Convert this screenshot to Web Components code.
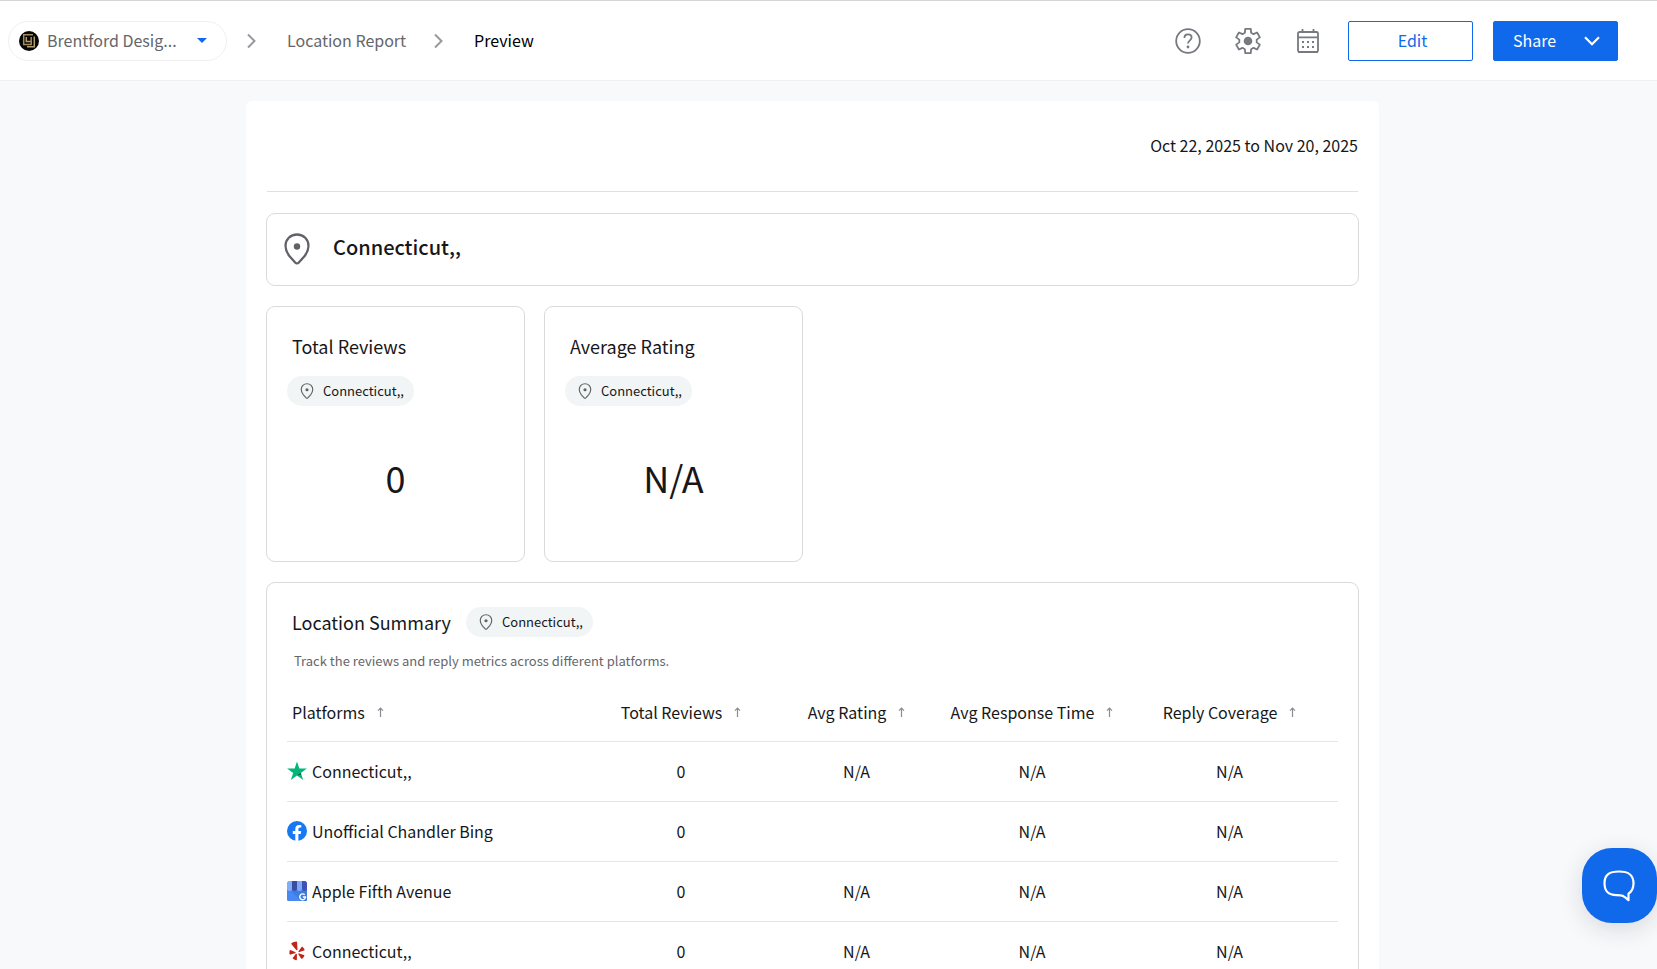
<!DOCTYPE html>
<html lang="en">
<head>
<meta charset="utf-8">
<meta name="viewport" content="width=device-width, initial-scale=1">
<title>Location Report – Preview</title>
<style>
  :root {
    --ink: #17171a;
    --muted: #65666c;
    --icon: #777980;
    --blue: #1068eb;
    --line: #e5e5e6;
    --border: #d9dadb;
    --page: #f8f9fb;
  }
  body {
    margin: 0;
    font-family: "Noto Sans CJK SC", "Noto Sans", sans-serif;
    font-size: 16px;
    line-height: 24px;
    color: var(--ink);
    background: var(--page);
  }
</style>
</head>
<body>
<report-app>
  <app-header slot="header"></app-header>
  <report-sheet>
    <span slot="range">Oct 22, 2025 to Nov 20, 2025</span>
    <location-banner>Connecticut,,</location-banner>
    <metric-grid>
      <metric-card heading="Total Reviews" place="Connecticut,,">0</metric-card>
      <metric-card heading="Average Rating" place="Connecticut,,">N/A</metric-card>
    </metric-grid>
    <location-summary place="Connecticut,,"></location-summary>
  </report-sheet>
  <chat-launcher slot="launcher"></chat-launcher>
</report-app>

<script>
// Six-toothed cog outline around (14, 14).
const cog = (() => {
  const points = [];
  for (let tooth = 0; tooth < 6; tooth++) {
    for (const [radius, offset] of [[8.8, -21], [12.4, -13], [12.4, 13], [8.8, 21]]) {
      const angle = (tooth * 60 + offset - 90) * Math.PI / 180;
      const r = Math.abs(offset) === 13 ? radius : radius;
      points.push(`${(14 + r * Math.cos(angle)).toFixed(2)},${(14 + r * Math.sin(angle)).toFixed(2)}`);
    }
  }
  return points.join(' ');
})();

const ICONS = {
  chevron: '<svg width="9" height="16" viewBox="0 0 9 16" fill="none" stroke="#98999d" stroke-width="2"><path d="M1 1.5 7.500 8 1 14.500"/></svg>',
  help: '<svg width="26" height="26" viewBox="0 0 26 26" fill="none" stroke="#777980" stroke-width="1.8"><circle cx="13" cy="13" r="11.800"/><path d="M9.400 9.900c0-2.200 1.500-3.500 3.600-3.500s3.600 1.300 3.600 3.200c0 2.700-3.600 2.900-3.600 6"/><circle cx="13" cy="19" r="1.400" fill="#777980" stroke="none"/></svg>',
  gear: `<svg width="28" height="28" viewBox="0 0 28 28" fill="none" stroke="#777980" stroke-width="1.800" stroke-linejoin="round"><polygon points="${cog}"/><circle cx="14" cy="14" r="4.300" fill="#777980" stroke="none"/></svg>`,
  calendar: '<svg width="24" height="26" viewBox="0 0 24 26" fill="none" stroke="#777980" stroke-width="1.800"><rect x="2" y="4" width="20" height="20" rx="1.500"/><path d="M2 9.300h20M6.500 4V1M17.500 4V1"/><path d="M2 24h20" stroke-width="2"/><path d="M6 14h12M6 19h12" stroke-width="2" stroke-dasharray="2 3"/></svg>',
  down: '<svg width="16" height="10" viewBox="0 0 16 10" fill="none" stroke="#fff" stroke-width="2.200"><path d="M1 1.200 8 8.200 15 1.200"/></svg>',
  pin: '<svg viewBox="0 0 26 32" fill="none"><path d="M13 1.500C6.400 1.500 1.500 6.400 1.500 12.800c0 4.200 1.800 7.600 4.300 10.800l5.600 6.100c.9 1 2.300 1 3.200 0l5.600-6.100c2.500-3.200 4.300-6.600 4.300-10.800C24.500 6.400 19.600 1.500 13 1.500z" stroke="#616268" stroke-width="2.300"/><circle cx="13" cy="13.500" r="3.200" fill="#616268"/></svg>',
  sort: '<svg width="7" height="10" viewBox="0 0 7 10" fill="none" stroke="#8b8c92" stroke-width="1.200"><path d="M3.500 10V1M1 3.600 3.500 1 6 3.600"/></svg>',
  star: '<svg width="20" height="20" viewBox="0 0 20 20"><path fill="#00b67a" d="M10 .4l2.300 7.100h7.600l-6.100 4.400 2.400 7.200-6.200-4.500-6.200 4.500 2.400-7.200L.1 7.500h7.600z"/><path fill="#005128" d="M14.300 13.500l-.6-1.600L10 14.600z"/></svg>',
  facebook: '<svg width="20" height="20" viewBox="0 0 20 20"><circle cx="10" cy="10" r="10" fill="#1877f2"/><path fill="#fff" d="M8.300 20v-7H5.800v-3h2.500V7.900c0-2.500 1.500-3.900 3.800-3.900 1 0 2.200.2 2.200.2v2.400H13c-1.200 0-1.600.8-1.600 1.600V10h2.800l-.5 3h-2.300v7a10 10 0 0 1-3.100 0z"/></svg>',
  business: '<svg width="20" height="20" viewBox="0 0 20 20"><rect y="1" width="20" height="19" rx="1.500" fill="#4989f5"/><path fill="#3f7ce0" d="M4 10l10 10h4.500c.8 0 1.500-.7 1.500-1.500V9z"/><path fill="#80aff5" d="M1.500 0H5v7.500a2.500 2.500 0 0 1-5 0V1.500z"/><path fill="#3c4ba6" d="M5 0h5v7.500a2.500 2.500 0 0 1-5 0z"/><path fill="#7babf7" d="M10 0h5v7.500a2.500 2.500 0 0 1-5 0z"/><path fill="#3f51b5" d="M15 0h3.500L20 1.500v6a2.500 2.500 0 0 1-5 0z"/><path d="M17.700 13.800a2.900 2.900 0 1 0 .8 2.200h-2.700" fill="none" stroke="#fff" stroke-width="1.400"/></svg>',
  yelp: '<svg width="20" height="20" viewBox="0 0 20 20" fill="#bf2519"><path d="M4.500 2.200C6 1.200 7.700.6 9.300.5c.5 0 .8.300.8.800l.4 7.100c0 .9-1 1.200-1.500.4L4.300 3.100c-.2-.3-.1-.7.2-.9z"/><path d="M3.300 9l4.800 1.900c.7.3.7 1.200 0 1.400l-4.700 1.300c-.6.2-1-.3-1-.800 0-1.100 0-2.300.3-3.300.1-.4.300-.6.6-.5z"/><path d="M9.900 13.500v5c0 .6-.4.800-.9.700-1.200-.3-2.200-.8-3-1.400-.4-.3-.4-.8-.1-1.100l2.800-3.700c.5-.6 1.200-.3 1.200.5z"/><path d="M12.200 12.400l4.700 1.600c.6.200.7.600.4 1.100-.5 1-1.300 1.900-2.100 2.600-.4.300-.9.200-1.100-.2l-2.600-4c-.4-.7 0-1.300.7-1.100z"/><path d="M11.700 10l2.900-4c.3-.4.700-.5 1.100-.1.800.8 1.400 1.700 1.800 2.700.2.500 0 .9-.5 1l-4.600 1.500c-.8.200-1.200-.5-.7-1.100z"/></svg>',
  brand: '<svg width="20" height="20" viewBox="0 0 20 20" fill="none"><circle cx="10" cy="10" r="10" fill="#060606"/><path d="M14 3.800H4.700v9.700h7.500V6" stroke="#a58c5c" stroke-width="1.500"/><path d="M7.300 6v4.500h4.500M15.300 5.500v10.300H8" stroke="#b79d6b" stroke-width="1.500"/></svg>',
  chat: '<svg width="34" height="34" viewBox="0 0 34 34" fill="none" stroke="#fff" stroke-width="2.200" stroke-linejoin="round"><path d="M17 2.500c-9.500 0-14.500 3-14.500 11.500 0 9 4 12 12 12.200l4.200.1c2 0 3 .8 4.200 1.900l3.600 3v-6.500c3.500-2.300 5-5.500 5-10.200C31.500 5.500 26.500 2.500 17 2.500z"/></svg>'
};

function define(name, render) {
  customElements.define(name, class extends HTMLElement {
    connectedCallback() {
      if (this.shadowRoot) return;
      const template = document.createElement('template');
      template.innerHTML = render(this);
      this.attachShadow({ mode: 'open' }).append(template.content.cloneNode(true));
    }
  });
}

define('report-app', () => `
  <style>
    :host { display: flex; flex-direction: column; height: 100vh; overflow: hidden; }
    main { flex: 1; min-height: 0; overflow-y: auto; scrollbar-width: none; padding: 20px 32px 20px 0; }
  </style>
  <slot name="header"></slot>
  <main><slot></slot></main>
  <slot name="launcher"></slot>`);

define('app-header', () => `
  <style>
    :host { display: block; flex: none; background: #fff; border-top: 1px solid #d5d5d6; border-bottom: 1px solid #eeeff1; }
    header { display: flex; align-items: center; justify-content: space-between; height: 79px; padding: 0 39px 0 8px; }
    nav, .tools { display: flex; align-items: center; }
    .account { display: flex; align-items: center; box-sizing: border-box; width: 219px; height: 40px; padding: 0 19px 0 10px; border: 1px solid #f0f0f1; border-radius: 20px; }
    .account svg { flex: none; }
    select { flex: 1; min-width: 0; margin-left: 4px; appearance: none; border: 0; background: none; padding: 0 4px 2px; font: inherit; color: var(--muted); }
    .caret { border: 5px solid transparent; border-top-color: var(--blue); border-bottom: 0; }
    nav > svg { margin: 0 31px 0 20px; }
    nav > a { padding-bottom: 2px; color: var(--muted); text-decoration: none; }
    nav > a + svg { margin-left: 28px; }
    .current { padding-bottom: 2px; color: #000; }
    button { font: inherit; cursor: pointer; }
    .icon { display: flex; align-items: center; justify-content: center; width: 40px; height: 40px; margin-right: 20px; padding: 0; border: 0; background: none; }
    .edit, .share { box-sizing: border-box; width: 125px; height: 40px; border: 1px solid var(--blue); border-radius: 2px; background: #fff; color: var(--blue); padding: 0 4px 2px 8px; }
    .share { display: flex; align-items: center; justify-content: space-between; margin-left: 20px; padding: 0 17px 0 19px; background: var(--blue); color: #fff; }
    .share span { padding-bottom: 2px; }
  </style>
  <header>
    <nav aria-label="Breadcrumb">
      <div class="account">${ICONS.brand}<select aria-label="Account"><option>Brentford Desig...</option></select><span class="caret"></span></div>
      ${ICONS.chevron}<a href="#report">Location Report</a>${ICONS.chevron}<span class="current" aria-current="page">Preview</span>
    </nav>
    <div class="tools">
      <button class="icon" aria-label="Help">${ICONS.help}</button>
      <button class="icon" aria-label="Settings">${ICONS.gear}</button>
      <button class="icon" aria-label="Schedule">${ICONS.calendar}</button>
      <button class="edit">Edit</button>
      <button class="share"><span>Share</span>${ICONS.down}</button>
    </div>
  </header>`);

define('report-sheet', () => `
  <style>
    :host { display: block; box-sizing: border-box; max-width: 1133px; margin: 0 auto; padding: 0 20px 20px; border-radius: 6px; background: #fff; }
    .range { display: flex; align-items: center; justify-content: flex-end; box-sizing: border-box; height: 91px; margin: 0 1px; padding-bottom: 2px; border-bottom: 1px solid #dfe0e1; }
    .body { display: grid; gap: 20px; padding-top: 21px; }
  </style>
  <div class="range"><slot name="range"></slot></div>
  <div class="body"><slot></slot></div>`);

define('location-banner', () => `
  <style>
    :host { display: flex; align-items: center; gap: 23px; box-sizing: border-box; height: 73px; padding: 0 17px 2px; border: 1px solid var(--border); border-radius: 9px; }
    svg { width: 26px; height: 32px; }
    h1 { margin: 0; padding-bottom: 4px; font-size: 20px; line-height: 30px; font-weight: 500; }
  </style>
  ${ICONS.pin}<h1><slot></slot></h1>`);

define('location-chip', () => `
  <style>
    :host { display: inline-flex; align-items: center; gap: 9px; height: 30px; padding: 0 10px 0 13px; border-radius: 15px; background: #f1f5f6; font-size: 13px; line-height: 20px; }
    svg { width: 14px; height: 16px; }
  </style>
  ${ICONS.pin}<slot></slot>`);

define('metric-grid', () => `
  <style>:host { display: grid; grid-template-columns: repeat(4, 1fr); gap: 19px; }</style>
  <slot></slot>`);

define('metric-card', el => `
  <style>
    :host { display: block; box-sizing: border-box; height: 256px; padding: 25px 20px 0; border: 1px solid var(--border); border-radius: 9px; }
    h2 { margin: 0 0 16px 5px; font-size: 18px; line-height: 28px; font-weight: 400; }
    .value { display: flex; justify-content: center; margin-top: 43px; font-size: 36px; line-height: 56px; }
  </style>
  <h2>${el.getAttribute('heading')}</h2>
  <location-chip>${el.getAttribute('place')}</location-chip>
  <div class="value"><slot></slot></div>`);

const ROWS = [
  ['star', 'Connecticut,,', '0', 'N/A', 'N/A', 'N/A'],
  ['facebook', 'Unofficial Chandler Bing', '0', '', 'N/A', 'N/A'],
  ['business', 'Apple Fifth Avenue', '0', 'N/A', 'N/A', 'N/A'],
  ['yelp', 'Connecticut,,', '0', 'N/A', 'N/A', 'N/A']
];
const HEADS = ['Platforms', 'Total Reviews', 'Avg Rating', 'Avg Response Time', 'Reply Coverage'];

define('location-summary', el => `
  <style>
    :host { display: block; padding: 24px 20px 20px; border: 1px solid var(--border); border-radius: 9px; }
    .title { display: flex; align-items: center; gap: 15px; padding-left: 5px; }
    h2 { margin: 0; font-size: 18px; line-height: 28px; font-weight: 400; }
    p { margin: 14px 0 13px 7px; font-size: 13px; line-height: 20px; color: var(--muted); }
    table { width: 100%; table-layout: fixed; border-collapse: separate; border-spacing: 0; }
    th, td { box-sizing: border-box; height: 60px; padding: 0 0 2px; border-bottom: 1px solid var(--line); font-weight: 400; text-align: center; }
    th:first-child, td:first-child { text-align: left; }
    th:first-child { padding-left: 5px; }
    th { height: 58px; }
    th button { display: inline-flex; align-items: center; gap: 12px; padding: 0; border: 0; background: none; font: inherit; color: inherit; }
    .platform { display: flex; align-items: center; gap: 5px; }
    .two { width: 178px; } .three { width: 173px; } .five { width: 217px; }
  </style>
  <div class="title"><h2>Location Summary</h2><location-chip>${el.getAttribute('place')}</location-chip></div>
  <p>Track the reviews and reply metrics across different platforms.</p>
  <table>
    <colgroup><col><col class="two"><col class="three"><col class="two"><col class="five"></colgroup>
    <thead><tr>${HEADS.map(h => `<th scope="col"><button>${h}${ICONS.sort}</button></th>`).join('')}</tr></thead>
    <tbody>${ROWS.map(([icon, name, ...cells]) => `<tr><td><div class="platform">${ICONS[icon]}<span>${name}</span></div></td>${cells.map(c => `<td>${c}</td>`).join('')}</tr>`).join('')}</tbody>
  </table>`);

define('chat-launcher', () => `
  <style>
    :host { position: fixed; right: 0; bottom: 46px; }
    button { display: flex; align-items: center; justify-content: center; width: 75px; height: 75px; padding: 0 2px 0 0; border: 0; border-radius: 30px; background: var(--blue); box-shadow: 0 6px 24px rgba(20, 30, 50, .14); cursor: pointer; }
  </style>
  <button aria-label="Open chat">${ICONS.chat}</button>`);
</script>
</body>
</html>
